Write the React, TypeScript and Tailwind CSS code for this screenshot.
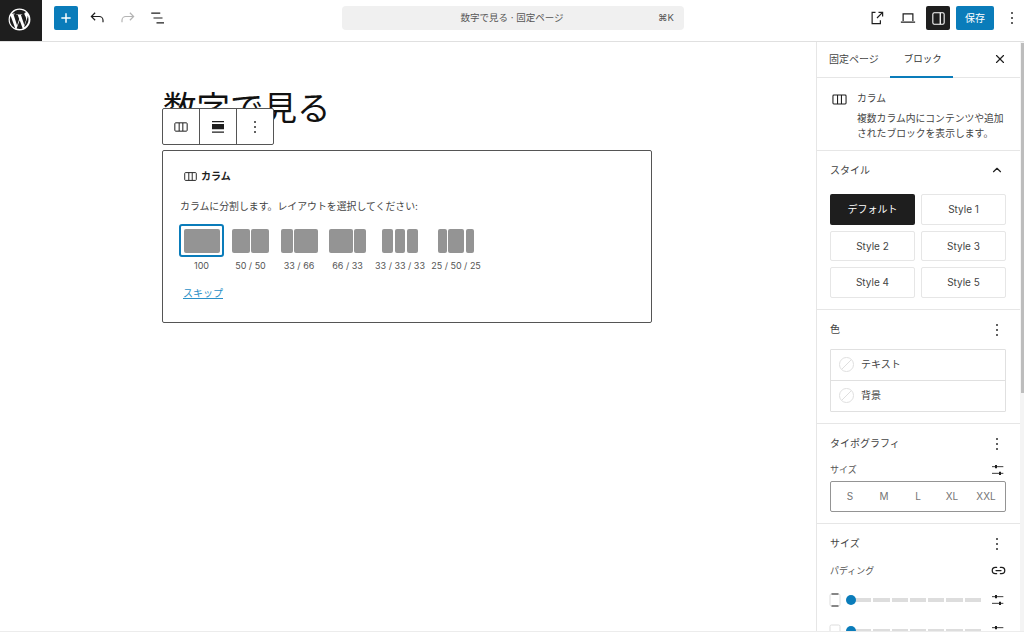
import { ChevronUp, Link2, X } from "lucide-react";

const font = "font-['Inter','Noto_Sans_CJK_JP',sans-serif]";

function ColumnsIcon({ className = "" }: { className?: string }) {
  return (
    <svg viewBox="0 0 24 24" className={className} fill="none">
      <path
        d="M4 5.75h16c.7 0 1.25.55 1.25 1.25v10c0 .7-.55 1.25-1.25 1.25H4c-.7 0-1.25-.55-1.25-1.25V7c0-.7.55-1.25 1.25-1.25Z M9.25 6v12 M14.75 6v12"
        stroke="currentColor"
        strokeWidth="1.5"
      />
    </svg>
  );
}

function WpLogo() {
  return (
    <svg viewBox="0 0 24 24" className="w-[23px] h-[23px]" fill="#fff">
      <path d="M12 .6a11.4 11.4 0 1 0 0 22.8A11.4 11.4 0 0 0 12 .6Zm0 1.1c2.7 0 5.2 1 7 2.8h-.2c-1 0-1.7.9-1.7 1.8 0 .8.5 1.5 1 2.3.4.7.8 1.5.8 2.8 0 .9-.3 1.9-.8 3.3l-1 3.4-3.7-11h1.2c.3 0 .3-.6 0-.6l-2.8.2-2.9-.2c-.3 0-.3.6 0 .6h1.2l1.6 4.4-2.2 6.7L5.7 6.400h1.2c.3 0 .3-.6 0-.6l-2.900.2C6.200 3.300 8.900 1.700 12 1.700ZM2.700 8.200 7.600 21.500A10.300 10.300 0 0 1 2.700 8.200Zm17.900-.1c.5 1.200.8 2.500.8 3.900 0 3.500-1.900 6.500-4.700 8.200l3-8.400c.5-1.400.8-2.400.8-3.300v-.4ZM12.200 12.700l3.100 8.600a10.300 10.300 0 0 1-6.300.2l3.200-8.800Z" />
    </svg>
  );
}

function Dots({ className = "" }: { className?: string }) {
  return (
    <svg viewBox="0 0 24 24" className={`w-[16px] h-[16px] ${className}`} fill="currentColor">
      <circle cx="12" cy="4.500" r="1.400" />
      <circle cx="12" cy="12" r="1.400" />
      <circle cx="12" cy="19.500" r="1.400" />
    </svg>
  );
}

function Sliders() {
  return (
    <svg viewBox="0 0 24 24" className="w-[16px] h-[16px] text-[#1e1e1e]" fill="none" stroke="currentColor" strokeWidth="1.300">
      <path d="M3 7h17M3 17h17" />
      <path d="M9 4.500v5M15 14.500v5" strokeWidth="3" />
    </svg>
  );
}

function Section({ title, icon, children, className = "" }: { title: string; icon?: React.ReactNode; children?: React.ReactNode; className?: string }) {
  return (
    <section className={`border-b border-[#e6e6e6] pl-[13px] pr-[14px] ${className}`}>
      <div className="flex items-center justify-between h-[20px] text-[10px] text-[#444]">
        <span>{title}</span>
        {icon ?? <Dots className="text-[#1e1e1e] mr-[1px]" />}
      </div>
      {children}
    </section>
  );
}

function Thumb({ parts, label, selected, gap = "gap-[2px]" }: { parts: number[]; label: string; selected?: boolean; gap?: string }) {
  return (
    <div className="flex flex-col items-center w-[45px] text-[9px] text-[#555]">
      <div className={`flex ${gap} h-[33px] w-[45px] items-center justify-center rounded-[3px] ${selected ? "border-2 border-[#0a7cba]" : ""}`}>
        {parts.map((w, i) => (
          <div key={i} className="h-[24px] rounded-[2px] bg-[#949494]" style={{ width: w }} />
        ))}
      </div>
      <span className="mt-[2px] whitespace-nowrap">{label}</span>
    </div>
  );
}

function SpacingRow({ bottom }: { bottom?: boolean }) {
  return (
    <div className="flex items-center h-[16px] mb-[15px]">
      <svg viewBox="0 0 12 14" className="w-[12px] h-[14px] -ml-[1px]" fill="none">
        <rect x="1" y="1" width="10" height="12" rx="1.500" stroke="#ddd" />
        {!bottom && <path d="M2.500 1h7M2.500 13h7" stroke="#1e1e1e" strokeWidth="1.200" />}
      </svg>
      <div className="relative flex-1 ml-[5px] mr-[9px] flex gap-[2px] pl-[9px]">
        <div className="absolute left-0 -top-[3px] w-[10px] h-[10px] rounded-full bg-[#0a7cba]" />
        {[0, 1, 2, 3, 4, 5, 6].map((i) => (
          <div key={i} className="h-[4px] flex-1 bg-[#ddd]" />
        ))}
      </div>
      <Sliders />
    </div>
  );
}

export default function App() {
  return (
    <div className={`${font} w-[1024px] h-[634px] bg-white flex flex-col overflow-hidden text-[#1e1e1e]`}>
      <header className="h-[42px] shrink-0 border-b border-[#e0e0e0] flex items-start">
        <div className="w-[42px] h-[41px] bg-[#1e1e1e] flex items-center justify-center pr-[4px] pb-[3px]">
          <WpLogo />
        </div>
        <div className="flex items-center pt-[6px]">
          <button className="ml-[12px] w-[24px] h-[24px] rounded-[2px] bg-[#0a7cba] text-white flex items-center justify-center">
            <svg viewBox="0 0 24 24" className="w-[16px] h-[16px]" fill="none" stroke="currentColor" strokeWidth="2.200">
              <path d="M12 5v14M5 12h14" />
            </svg>
          </button>
          <svg viewBox="0 0 24 24" className="ml-[10px] w-[18px] h-[18px] text-[#1e1e1e]" fill="none" stroke="currentColor" strokeWidth="1.600">
            <path d="M20 17.500v-2.500a5 5 0 0 0-5-5H5M9.500 5 4.500 10l5 5" />
          </svg>
          <svg viewBox="0 0 24 24" className="ml-[13px] w-[18px] h-[18px] text-[#b4b4b4]" fill="none" stroke="currentColor" strokeWidth="1.600">
            <path d="M4 17.500v-2.500a5 5 0 0 1 5-5h10M14.500 5l5 5-5 5" />
          </svg>
          <svg viewBox="0 0 24 24" className="ml-[12px] w-[18px] h-[18px] text-[#1e1e1e]" fill="none" stroke="currentColor" strokeWidth="1.600">
            <path d="M3 5.500h12M6 12h12M10 18.500h10" />
          </svg>
          <div className="ml-[175px] w-[342px] h-[24px] rounded-[4px] bg-[#f0f0f0] flex items-center text-[9.5px] text-[#555] relative">
            <span className="w-full text-center pr-[2px]">数字で見る · 固定ページ</span>
            <span className="absolute right-[10px] text-[9.5px]">⌘K</span>
          </div>
          <svg viewBox="0 0 24 24" className="ml-[184px] w-[18px] h-[18px] text-[#1e1e1e]" fill="none" stroke="currentColor" strokeWidth="1.600">
            <path d="M10 4.500H5.500v15h11V15M12 12l7.500-7.500M14 4.500h5.500V10" />
          </svg>
          <svg viewBox="0 0 24 24" className="ml-[13px] w-[18px] h-[18px] text-[#1e1e1e]" fill="none" stroke="currentColor" strokeWidth="1.600">
            <path d="M5.500 16V6.500h13V16M2.500 17.500h19" />
          </svg>
          <div className="ml-[9px] w-[24px] h-[24px] rounded-[2px] bg-[#1e1e1e] flex items-center justify-center text-white">
            <svg viewBox="0 0 24 24" className="w-[17px] h-[17px]" fill="none" stroke="currentColor" strokeWidth="1.500">
              <rect x="4" y="4" width="16" height="16" rx="2" />
              <path d="M14.500 4v16" strokeWidth="1.800" />
            </svg>
          </div>
          <button className="ml-[6px] w-[38px] h-[24px] rounded-[2px] bg-[#0a7cba] text-white text-[10px]">保存</button>
          <Dots className="ml-[10px] text-[#1e1e1e]" />
        </div>
      </header>

      <div className="flex-1 flex min-h-0 border-b border-[#ececec] mb-[2px]">
        <main className="relative w-[816px] shrink-0 pl-[162px]">
          <h1 className="text-[33.500px] leading-[40px] font-normal text-[#111] mt-[46px] ml-[1px]">数字で見る</h1>
          <div className="absolute left-[162px] top-[66px] h-[37px] w-[112px] flex bg-white border border-[#555] rounded-[2px]">
            <div className="w-[37px] flex items-center justify-center border-r border-[#555]">
              <ColumnsIcon className="w-[16px] h-[16px]" />
            </div>
            <div className="w-[37px] flex items-center justify-center border-r border-[#555]">
              <svg viewBox="0 0 24 24" className="w-[18px] h-[18px]" fill="currentColor">
                <path d="M4 4h16v1.500H4zM4 8h16v7H4zM4 18h16v1.500H4z" />
              </svg>
            </div>
            <div className="flex-1 flex items-center justify-center">
              <Dots />
            </div>
          </div>
          <div className="mt-[22px] w-[490px] h-[173px] border border-[#555] rounded-[2px] px-[17px] pt-[17px]">
            <div className="flex items-center h-[16px] ml-[3px] text-[10px] font-semibold">
              <ColumnsIcon className="w-[15px] h-[15px] mr-[3px]" />
              カラム
            </div>
            <p className="mt-[15px] text-[9.900px] leading-[14px] text-[#444]">カラムに分割します。レイアウトを選択してください:</p>
            <div className="mt-[11px] -ml-[1px] flex">
              <Thumb parts={[36]} label="100" selected />
              <div className="w-[4px]" />
              <Thumb parts={[18, 18]} label="50 / 50" gap="gap-[1px]" />
              <div className="w-[3.500px]" />
              <Thumb parts={[12, 23.500]} label="33 / 66" gap="gap-[1.500px]" />
              <div className="w-[3.500px]" />
              <Thumb parts={[23.500, 11.500]} label="66 / 33" gap="gap-[1.500px]" />
              <div className="w-[7.500px]" />
              <Thumb parts={[10.500, 10.500, 10.500]} label="33 / 33 / 33" />
              <div className="w-[11px]" />
              <Thumb parts={[8.500, 16, 8.500]} label="25 / 50 / 25" gap="gap-[1.500px]" />
            </div>
            <a className="block mt-[13px] ml-[3px] text-[10px] leading-[14px] text-[#2a8fc7] underline">スキップ</a>
          </div>
        </main>

        <aside className="relative flex-1 border-l border-[#e6e6e6] overflow-hidden pr-[4px]">
          <div className="absolute right-0 top-0 bottom-0 w-[4px] bg-[#f4f4f4]">
            <div className="ml-[1px] mt-[1px] w-[3px] h-[350px] bg-[#bdbdbd]" />
          </div>
          <div className="h-[36px] flex items-center border-b border-[#e6e6e6] relative text-[10px] text-[#444]">
            <span className="ml-[12px]">固定ページ</span>
            <span className="ml-[25px] text-[#333] text-[9.500px]">ブロック</span>
            <div className="absolute left-[73px] bottom-[-1px] w-[63px] h-[2px] bg-[#0a7cba]" />
            <X className="absolute right-[13px] top-[10px] w-[14px] h-[14px] text-[#1e1e1e]" strokeWidth={2} />
          </div>
          <div className="flex border-b border-[#e6e6e6] h-[73px] pt-[13px] pl-[14px] pr-[14px]">
            <ColumnsIcon className="w-[17px] h-[17px] mr-[9px] shrink-0 text-[#1e1e1e]" />
            <div className="text-[9.800px] text-[#444]">
              <div className="leading-[16px]">カラム</div>
              <p className="mt-[4px] leading-[15px] w-[150px]">複数カラム内にコンテンツや追加されたブロックを表示します。</p>
            </div>
          </div>

          <Section title="スタイル" className="pt-[9px] pb-[11px]" icon={<ChevronUp className="w-[14px] h-[14px] text-[#1e1e1e] mr-[2px]" strokeWidth={2} />}>
            <div className="mt-[14px] grid grid-cols-2 gap-x-[6px] gap-y-[6px] text-[10px] text-[#444]">
              <div className="h-[30.500px] rounded-[2px] bg-[#1e1e1e] text-white flex items-center justify-center">デフォルト</div>
              {["Style 1", "Style 2", "Style 3", "Style 4", "Style 5"].map((s) => (
                <div key={s} className="h-[30.500px] pt-[1px] rounded-[2px] border border-[#e6e6e6] flex items-center justify-center">{s}</div>
              ))}
            </div>
          </Section>

          <Section title="色" className="pt-[10px] pb-[11px]">
            <div className="mt-[9px] border border-[#e0e0e0] rounded-[1px] text-[10px] text-[#444]">
              {["テキスト", "背景"].map((t, i) => (
                <div key={t} className={`h-[30.500px] flex items-center pl-[8px] ${i ? "border-t border-[#e0e0e0]" : ""}`}>
                  <svg viewBox="0 0 16 16" className="w-[15px] h-[15px] mr-[7px]" fill="none" stroke="#ddd">
                    <circle cx="8" cy="8" r="7.500" />
                    <path d="M3 13 13 3" />
                  </svg>
                  {t}
                </div>
              ))}
            </div>
          </Section>

          <Section title="タイポグラフィ" className="pt-[10px] pb-[11px]">
            <div className="mt-[8px] flex items-center justify-between h-[16px] text-[9px] text-[#555]">
              <span>サイズ</span>
              <Sliders />
            </div>
            <div className="mt-[3px] h-[31px] border border-[#949494] rounded-[2px] flex items-center text-[10px] text-[#757575] px-[2px]">
              {["S", "M", "L", "XL", "XXL"].map((s) => (
                <span key={s} className="flex-1 text-center">{s}</span>
              ))}
            </div>
          </Section>

          <section className="pl-[13px] pr-[14px] pt-[10px]">
            <div className="flex items-center justify-between h-[20px] text-[10px] text-[#444]">
              <span>サイズ</span>
              <Dots className="text-[#1e1e1e] mr-[1px]" />
            </div>
            <div className="mt-[9px] flex items-center justify-between h-[16px] text-[9px] text-[#555]">
              <span>パディング</span>
              <Link2 className="w-[15px] h-[15px] text-[#1e1e1e]" />
            </div>
            <div className="mt-[13px]">
              <SpacingRow />
              <SpacingRow bottom />
            </div>
          </section>
        </aside>
      </div>
    </div>
  );
}
